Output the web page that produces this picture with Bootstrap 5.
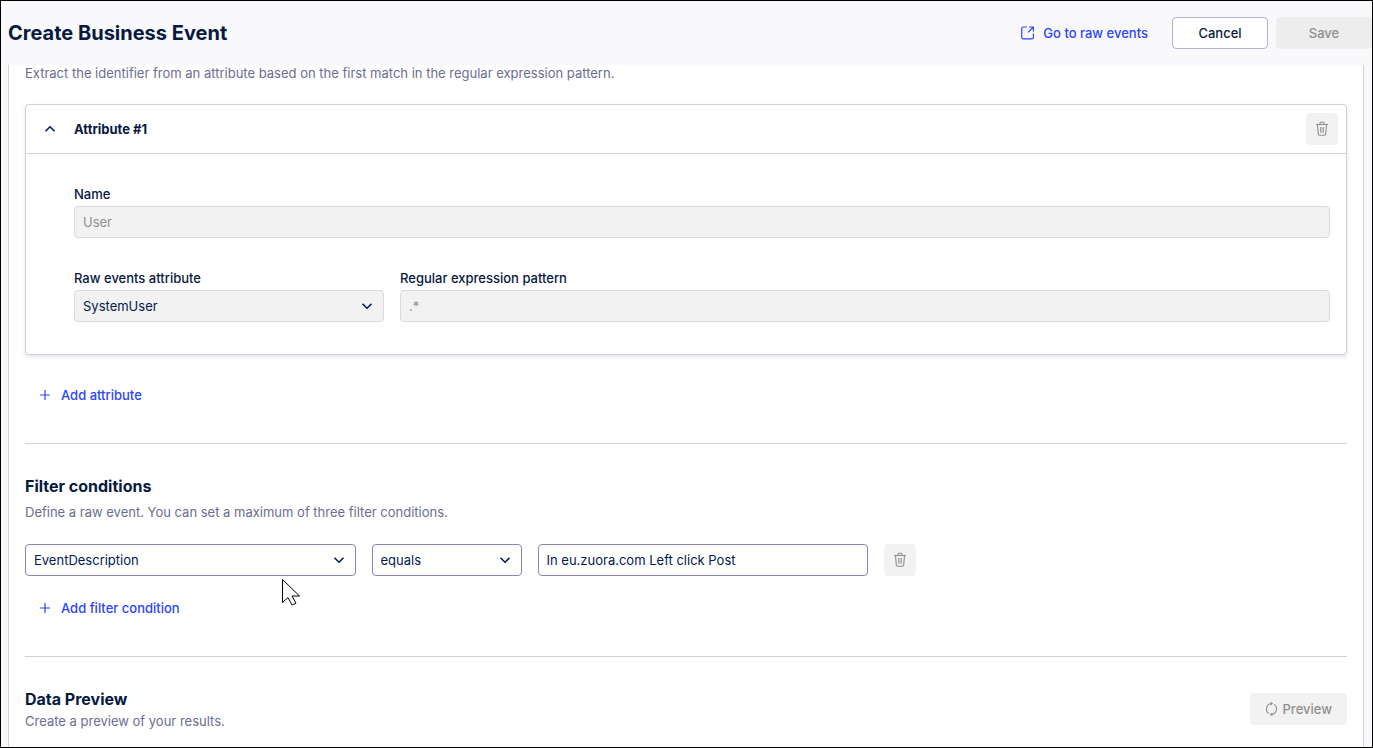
<!DOCTYPE html>
<html lang="en">
<head>
<meta charset="utf-8">
<meta name="viewport" content="width=device-width, initial-scale=1">
<title>Create Business Event</title>
<link href="https://cdn.jsdelivr.net/npm/bootstrap@5.3.0/dist/css/bootstrap.min.css" rel="stylesheet">
<style>
  :root { --ink: #03194f; --ink-dark: #06193f; --muted: #6b6d92; --line: #d0cfde; --field: #8a87b0; --blue: #2b44ff; --off: #f2f2f2; --off-text: #8f8f8f; }
  body { font-family: Inter, "Liberation Sans", sans-serif; font-size: 13px; line-height: 16px; color: var(--ink-dark); background: #f9f9fc; }
  .frame { height: 100vh; border: 1px solid #000; }
  .topbar { height: 64px; flex: none; padding-left: 7px; }
  .page-title { font-size: 20px; line-height: 24px; font-weight: 700; }
  .section-title { font-size: 16px; line-height: 20px; font-weight: 700; }
  .attr-title { font-size: 13px; line-height: 16px; font-weight: 700; }
  .panel { margin: 0 8px 0 7px; padding: 0 16px; background: #fff; border: solid var(--line); border-width: 0 1px; }
  .hint { color: var(--muted); }
  .btn { --bs-btn-font-size: 13px; --bs-btn-line-height: 16px; --bs-btn-font-weight: 500; --bs-btn-border-radius: 4px; --bs-btn-padding-y: 0; --bs-btn-padding-x: 14px; --bs-btn-disabled-opacity: 1; height: 32px; display: inline-flex; align-items: center; justify-content: center; }
  .btn-action { min-width: 96px; }
  .btn-plain { --bs-btn-color: var(--ink-dark); --bs-btn-bg: #fff; --bs-btn-border-color: #b3b2c8; --bs-btn-hover-bg: #f4f4fa; --bs-btn-hover-border-color: var(--field); }
  .btn-off { --bs-btn-disabled-color: var(--off-text); --bs-btn-disabled-bg: var(--off); --bs-btn-disabled-border-color: var(--off); }
  .topbar .btn-off { --bs-btn-disabled-bg: #ededee; --bs-btn-disabled-border-color: #ededee; }
  .btn-square { width: 32px; padding: 0; flex: none; }
  .btn-toggle { width: 16px; height: 16px; padding: 0; border: 0; }
  .btn-add { --bs-btn-color: var(--blue); --bs-btn-hover-color: #1a2ed0; gap: 11px; }
  .raw-link { color: var(--blue); font-weight: 500; text-decoration: none; margin-right: 24px; }
  .attr-card { --bs-card-border-color: var(--line); --bs-card-border-radius: 4px; --bs-card-inner-border-radius: 3px; box-shadow: 0 2px 4px rgba(30, 30, 80, .12); margin-top: 23px; }
  .attr-head { height: 49px; padding: 0 8px 0 16px; border-bottom: 1px solid var(--line); }
  .attr-body { padding: 32px 16px 32px 48px; }
  .form-label { margin-bottom: 4px; font-weight: 500; display: block; }
  .form-control, .form-select { height: 32px; padding: 0 8px; font-size: 13px; line-height: 16px; color: var(--ink); border-color: var(--field); border-radius: 4px; }
  .form-select { padding-right: 32px; background-size: 12px 12px; background-position: right 10px center; background-image: url("data:image/svg+xml,%3Csvg xmlns='http://www.w3.org/2000/svg' viewBox='0 0 12 12'%3E%3Cpath d='M1.5 3.8 6 8.2l4.5-4.4' fill='none' stroke='%2303194f' stroke-width='1.6'/%3E%3C/svg%3E"); }
  .form-control:disabled, .form-select:disabled { background-color: var(--off); border-color: #dadada; opacity: 1; }
  .form-control:disabled { color: var(--off-text); }
  .pair { display: grid; grid-template-columns: 1fr 3fr; gap: 16px; margin-top: 32px; }
  .rule { margin: 32px 0; border-color: var(--line); opacity: 1; }
  .w-quarter { flex: 0 0 25%; width: 25%; }
  .w-operator { flex: 0 0 150px; width: 150px; }
  .pointer { position: absolute; left: 256px; top: 34px; z-index: 2; pointer-events: none; }
</style>
</head>
<body>
<svg class="d-none" xmlns="http://www.w3.org/2000/svg">
  <symbol id="trash" viewBox="0 0 14 16"><g fill="none" stroke="currentColor"><path d="M1 3.5h12M5 3V2q0-.8.8-.8h2.400q.8 0 .8.800v1M2.500 3.500l.8 9.400q.1 1.300 1.400 1.300h4.600q1.300 0 1.400-1.300l.8-9.400" stroke-width="1.1"/><path d="M5.500 6v5.800M7 6v5.800M8.500 6v5.800" stroke-width=".8"/></g></symbol>
  <symbol id="plus" viewBox="0 0 10 10"><path d="M5 0v10M0 5h10" fill="none" stroke="currentColor" stroke-width="1.2"/></symbol>
</svg>
<div class="frame d-flex flex-column overflow-hidden">
  <header class="topbar d-flex align-items-center">
    <h1 class="page-title mb-0 me-auto">Create Business Event</h1>
    <a href="#raw" class="raw-link d-flex align-items-center gap-2">
      <svg width="14" height="14" viewBox="0 0 14 14" fill="none" stroke="currentColor" stroke-width="1.2"><path d="M6 1H2.200Q.7 1 .7 2.500v8.900q0 1.500 1.500 1.500h8.700q1.500 0 1.500-1.500V7.500M8 1h4.400v4.400M12.400 1 7 6.400"/></svg>
      <span>Go to raw events</span>
    </a>
    <button type="button" class="btn btn-plain btn-action me-2">Cancel</button>
    <button type="button" class="btn btn-off btn-action" disabled>Save</button>
  </header>

  <main class="panel flex-grow-1 overflow-hidden">
    <p class="hint mb-0">Extract the identifier from an attribute based on the first match in the regular expression pattern.</p>

    <section class="card attr-card">
      <div class="attr-head d-flex align-items-center">
        <button type="button" class="btn btn-toggle" aria-label="Collapse"><svg width="12" height="12" viewBox="0 0 12 12" fill="none" stroke="#03194f" stroke-width="1.6"><path d="M1.500 8.200 6 3.800l4.500 4.400"/></svg></button>
        <h2 class="attr-title mb-0 ms-3 me-auto">Attribute #1</h2>
        <button type="button" class="btn btn-off btn-square" disabled aria-label="Delete attribute"><svg width="14" height="16"><use href="#trash"/></svg></button>
      </div>
      <div class="attr-body">
        <label class="form-label" for="name">Name</label>
        <input class="form-control" id="name" type="text" value="User" disabled>
        <div class="pair">
          <div>
            <label class="form-label" for="rawattr">Raw events attribute</label>
            <select class="form-select" id="rawattr" disabled><option>SystemUser</option></select>
          </div>
          <div>
            <label class="form-label" for="regex">Regular expression pattern</label>
            <input class="form-control" id="regex" type="text" value=".*" disabled>
          </div>
        </div>
      </div>
    </section>
    <button type="button" class="btn btn-add mt-4"><svg width="10" height="10"><use href="#plus"/></svg>Add attribute</button>

    <hr class="rule">

    <section>
      <h2 class="section-title mb-2">Filter conditions</h2>
      <p class="hint mb-4">Define a raw event. You can set a maximum of three filter conditions.</p>
      <div class="d-flex gap-3 position-relative">
        <select class="form-select w-quarter" aria-label="Attribute"><option>EventDescription</option></select>
        <select class="form-select w-operator" aria-label="Operator"><option>equals</option></select>
        <input class="form-control w-quarter" type="text" aria-label="Value" value="In eu.zuora.com Left click Post">
        <button type="button" class="btn btn-off btn-square" disabled aria-label="Delete condition"><svg width="14" height="16"><use href="#trash"/></svg></button>
        <svg class="pointer" width="20" height="28" viewBox="0 0 20 28"><path d="M1.500 1.500v23l5.500-5 4 7.500 4-1.800-4-7.200h7.500z" fill="#fff" stroke="#000"/></svg>
      </div>
      <button type="button" class="btn btn-add mt-3"><svg width="10" height="10"><use href="#plus"/></svg>Add filter condition</button>
    </section>

    <hr class="rule">

    <section class="d-flex align-items-center justify-content-between">
      <div>
        <h2 class="section-title mb-1">Data Preview</h2>
        <p class="hint mb-0">Create a preview of your results.</p>
      </div>
      <button type="button" class="btn btn-off gap-1" disabled><svg width="14" height="16" viewBox="0 0 14 16"><g fill="none" stroke="currentColor" stroke-width="1.1"><path d="M3.800 12.600A5.600 5.600 0 0 1 6.500 2.500"/><path d="M9.200 3.400A5.600 5.600 0 0 1 6.500 13.500"/></g><path d="M5.600.5 8.200 2.600 5.600 4.700zM7.400 11.300 4.800 13.400l2.600 2.100z" fill="currentColor"/></svg>Preview</button>
    </section>
  </main>
</div>
<script src="https://cdn.jsdelivr.net/npm/bootstrap@5.3.0/dist/js/bootstrap.bundle.min.js"></script>
</body>
</html>
